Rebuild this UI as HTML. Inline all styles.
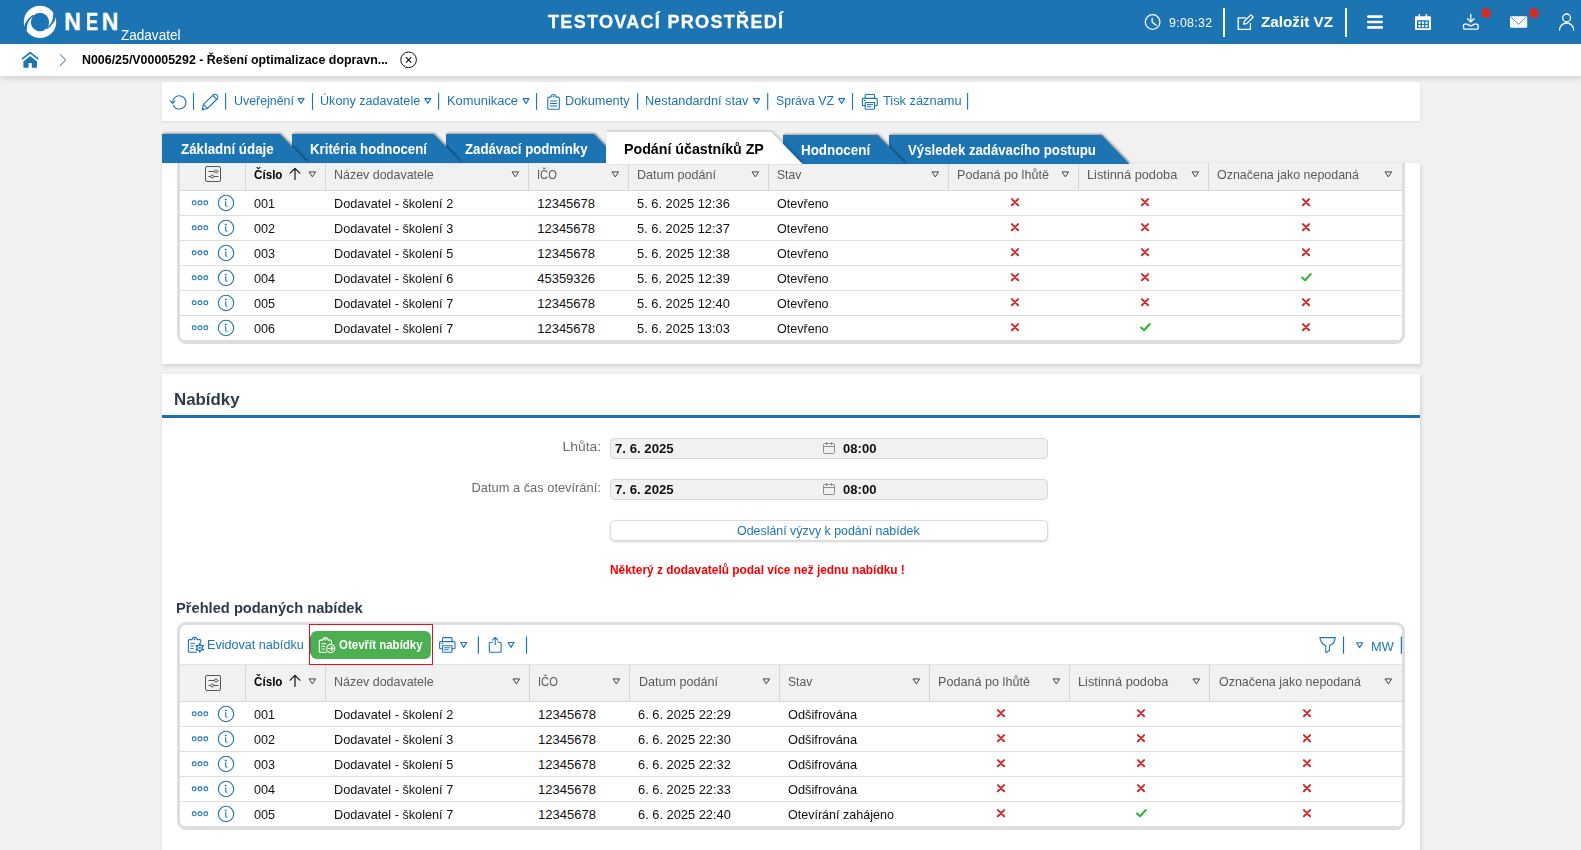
<!DOCTYPE html>
<html lang="cs">
<head>
<meta charset="utf-8">
<title>NEN - Zadavatel</title>
<style>
html,body{margin:0;padding:0;}
body{width:1581px;height:850px;overflow:hidden;background:#f1f1f1;font-family:"Liberation Sans",sans-serif;font-size:13px;color:#111;position:relative;}
*{box-sizing:border-box;}
.abs{position:absolute;}
svg{display:block;overflow:visible;}
.t{position:absolute;white-space:nowrap;line-height:1;transform-origin:0 50%;}
/* header */
#hdr{position:absolute;left:0;top:0;width:1581px;height:44px;background:#1d74b3;z-index:3;}
#crumb{position:absolute;left:0;top:44px;width:1581px;height:32px;background:#fff;box-shadow:0 2px 6px rgba(0,0,0,.15);z-index:2;}
/* cards */
.card{position:absolute;left:162px;width:1258px;background:#fff;}
#tb{top:82px;height:39px;box-shadow:0 1px 2px rgba(0,0,0,.09);}
#card1{top:163px;height:201px;box-shadow:1px 2px 4px rgba(0,0,0,.14);}
#card2{top:374px;height:480px;box-shadow:1px 2px 4px rgba(0,0,0,.14);}

/* tables */
.tw{position:absolute;left:177px;width:1228px;border:3px solid #dcdee0;border-radius:9px;background:#fff;overflow:hidden;}
.th{position:relative;height:36px;background:#f1f1f1;border-bottom:1px solid #d9d9d9;}
.tr{position:relative;height:25px;border-bottom:1px solid #dedede;}
.tr:last-child{border-bottom:1px solid #dedede;}
.th .t{color:#5a5a5a;}
.th .vs{position:absolute;top:0;width:1px;height:36px;background:#d6d6d6;}
.tr .t{top:6px;color:#111;}
#t2 .th{height:37px;}
#t2 .th .vs{height:37px;}
.ic{position:absolute;}

.fld{position:absolute;left:610px;width:438px;height:21px;background:#f1f1f1;border:1px solid #d8d8d8;border-radius:4px;}
.lbl{position:absolute;white-space:nowrap;line-height:1;color:#6a6a6a;transform-origin:100% 50%;}
.blue{color:#1d74b3;}
.sep{position:absolute;width:2px;background:#1d74b3;}
</style>
</head>
<body>
<div id="hdr">
<svg class="abs" style="left:0;top:0" width="130" height="44" viewBox="0 0 130 44">
<circle cx="40" cy="21.9" r="16.2" fill="#fff"/>
<circle cx="40" cy="22" r="9.2" fill="#1d74b3"/>
<path d="M24.06,26.9 Q25.2,20.6 32.8,14.8 L33.6,15.8 Q28.2,20.2 27.3,25.2 L26.65,31.05 L23.2,31.2 Z" fill="#1d74b3"/>
<path d="M55.94,17.1 Q54.8,23.4 47.2,29.2 L46.4,28.2 Q51.8,23.8 52.7,18.8 L53.35,12.95 L56.8,12.8 Z" fill="#1d74b3"/>
</svg>
<span class="t" id="nen1" style="left:64.2px;top:10.7px;font-size:23px;font-weight:700;color:#fff;-webkit-text-stroke:.3px #fff;transform:scaleX(1.0)">N</span><span class="t" id="nen2" style="left:86.1px;top:10.7px;font-size:23px;font-weight:700;color:#fff;-webkit-text-stroke:.3px #fff;transform:scaleX(.8)">E</span><span class="t" id="nen3" style="left:101.8px;top:10.7px;font-size:23px;font-weight:700;color:#fff;-webkit-text-stroke:.3px #fff;transform:scaleX(1.0)">N</span>
<span class="t" id="zad" style="left:120.6px;top:28px;font-size:14px;color:#fff;transform:scaleX(0.967)">Zadavatel</span>
<span class="t" id="ttl" style="left:548px;top:12.3px;font-size:19px;font-weight:700;color:#fff;letter-spacing:1.35px;-webkit-text-stroke:.3px #fff;transform:scaleX(.95)">TESTOVACÍ PROSTŘEDÍ</span>
<svg class="abs" style="left:1140px;top:8px" width="441" height="30" viewBox="1140 8 441 30" fill="none" stroke="#fff" stroke-width="1.3" stroke-linecap="round" stroke-linejoin="round">
<circle cx="1152.6" cy="22" r="7.3"/>
<path d="M1152.2,18.4 V22.2 L1156.2,25.3"/>
<path d="M1245.5,17.8 H1238.2 V29.4 H1250.4 V23.6"/>
<path d="M1243.6,24.2 L1244.3,21.3 L1250.9,14.9 L1253.2,17.2 L1246.6,23.6 Z"/>
<g stroke="none" fill="#fff">
<rect x="1223" y="8" width="2" height="29"/>
<rect x="1345" y="8" width="2" height="29"/>
<rect x="1367" y="15.3" width="16" height="2.6" rx="1.3"/>
<rect x="1367" y="20.7" width="16" height="2.6" rx="1.3"/>
<rect x="1367" y="26.1" width="16" height="2.6" rx="1.3"/>
<path d="M1416,16.2 H1430 A1,1 0 0 1 1431,17.2 V29 A1,1 0 0 1 1430,30 H1416 A1,1 0 0 1 1415,29 V17.2 A1,1 0 0 1 1416,16.2 Z M1417,20.2 V28.2 H1429 V20.2 Z"/>
<rect x="1418.6" y="14" width="1.5" height="4" rx=".7"/>
<rect x="1425.6" y="14" width="1.5" height="4" rx=".7"/>
<rect x="1418.4" y="21.6" width="2.2" height="2.2"/><rect x="1421.9" y="21.6" width="2.2" height="2.2"/><rect x="1425.4" y="21.6" width="2.2" height="2.2"/>
<rect x="1418.4" y="25" width="2.2" height="2.2"/><rect x="1421.9" y="25" width="2.2" height="2.2"/><rect x="1425.4" y="25" width="2.2" height="2.2"/>
<rect x="1510" y="16.2" width="17.2" height="11.6" rx="1.2"/>
<circle cx="1486.1" cy="13.1" r="5.1" fill="#c9302c"/>
<circle cx="1534.1" cy="13.1" r="5.1" fill="#c9302c"/>
</g>
<path d="M1511.2,17.2 L1518.6,24.4 L1526,17.2" stroke="#1d74b3" stroke-width=".8"/>
<path d="M1470.8,14.5 V21.8 M1467.6,18.8 L1470.8,22 L1474,18.8"/>
<path d="M1464.6,24.2 H1467.6 Q1470.8,27.4 1474,24.2 H1477 Q1478.1,24.2 1478.1,25.3 V28 Q1478.1,29.1 1477,29.1 H1464.6 Q1463.5,29.1 1463.5,28 V25.3 Q1463.5,24.2 1464.6,24.2 Z"/>
<circle cx="1566.6" cy="17.9" r="3.9"/>
<path d="M1559.6,30 A7,7 0 0 1 1573.6,30"/>
</svg>
<span class="t" id="clk" style="left:1168.6px;top:16.5px;font-size:12px;color:#fff;letter-spacing:.3px;transform:scaleX(1.029)">9:08:32</span>
<span class="t" id="zvz" style="left:1261.1px;top:14px;font-size:15px;font-weight:700;color:#fff;transform:scaleX(1.017)">Založit VZ</span>
</div>
<div id="crumb">
<svg class="abs" style="left:20px;top:6px" width="50" height="20" viewBox="20 50 50 20">
<path d="M22.6,58.6 L30.2,52.6 L37.8,58.6" fill="none" stroke="#1d74b3" stroke-width="1.7" stroke-linecap="round" stroke-linejoin="round"/>
<path d="M23.4,61.6 L30.2,56 L37,61.6 V67 Q37,67.8 36.2,67.8 H31.8 V63 H28.6 V67.8 H24.2 Q23.4,67.8 23.4,67 Z" fill="#1d74b3"/>
<path d="M59.8,54.3 L65.7,60.1 L59.8,65.9" fill="none" stroke="#2a5f99" stroke-width="1"/>
</svg>
<span class="t" id="bc" style="left:82.2px;top:8.7px;font-size:13px;font-weight:700;color:#000;transform:scaleX(0.954)">N006/25/V00005292 - Řešení optimalizace dopravn...</span>
<svg class="abs" style="left:398px;top:6px" width="22" height="20" viewBox="398 50 22 20" fill="none" stroke="#111" stroke-width="1">
<circle cx="408.6" cy="59.8" r="7.8"/>
<path d="M405.9,57.2 L411.3,62.6 M411.3,57.2 L405.9,62.6" stroke-width="1.2"/>
</svg>
</div>
<div id="tb" class="card"></div>
<svg class="abs" style="left:162px;top:82px" width="1258" height="39" viewBox="162 82 1258 39" fill="none" stroke="#1d74b3" stroke-width="1.1" stroke-linejoin="round" stroke-linecap="round">
<g stroke-linecap="butt"><path d="M193.5,93 V109.8"/><path d="M225.6,93 V109.8"/><path d="M312.5,93 V109.8"/><path d="M438.6,93 V109.8"/><path d="M536.5,93 V109.8"/><path d="M637.6,93 V109.8"/><path d="M767.7,93 V109.8"/><path d="M852.5,93 V109.8"/><path d="M967.6,93 V109.8"/></g>
<g stroke-width="1.1"><path d="M298.1,98.6 H304.1 L301.1,103.5 Z"/><path d="M424.8,98.6 H430.8 L427.8,103.5 Z"/><path d="M523.0,98.6 H529.0 L526.0,103.5 Z"/><path d="M753.5,98.6 H759.5 L756.5,103.5 Z"/><path d="M838.7,98.6 H844.7 L841.7,103.5 Z"/></g>
<path d="M172.7,102.6 A6.6,6.6 0 1 1 173.4,105.4"/><path d="M170.2,100.9 L172.6,103.4 L175,100.9"/>
<path d="M202.3,109.7 L203.4,104.4 L213.6,94.6 Q215.4,93.6 217,95.2 Q218.5,96.8 217.6,98.5 L207.4,108.5 Z"/><path d="M203.7,104.6 L207.2,108.2 M212.9,95.5 L216.6,99.2"/><path d="M202.3,109.7 L202.7,107.8 L204.2,109.3 Z" fill="#1d74b3" stroke-width=".4"/>
<path d="M548.8,97.1 H551 Q551.3,94.5 553.5,94.5 Q555.8,94.5 556.1,97.1 H558.3 Q559.3,97.1 559.3,98.1 V108.3 Q559.3,109.3 558.3,109.3 H548.8 Q547.8,109.3 547.8,108.3 V98.1 Q547.8,97.1 548.8,97.1 Z"/><path d="M550.3,101 H556.8 M550.3,103.5 H556.8 M550.3,106 H556.8" stroke-width="1"/><circle cx="553.5" cy="96.6" r=".5" fill="#1d74b3" stroke-width=".5"/>
<path d="M865.2,98.4 V95.2 Q865.2,94.5 865.9,94.5 H873.8 Q874.5,94.5 874.5,95.2 V98.4"/><path d="M865.2,105.6 H863.4 Q862.4,105.6 862.4,104.6 V99.4 Q862.4,98.4 863.4,98.4 H876.2 Q877.2,98.4 877.2,99.4 V104.6 Q877.2,105.6 876.2,105.6 H874.5"/><path d="M865.2,102.5 H874.5 V108.6 Q874.5,109.3 873.8,109.3 H865.9 Q865.2,109.3 865.2,108.6 Z"/><path d="M867.2,104.6 H872.6 M867.2,106.6 H870.8" stroke-width="1"/><path d="M864.2,100.5 H865.4" stroke-width="1"/>
</svg>
<span class="t blue" id="tb1" style="left:233.8px;top:94.5px;font-size:12.3px;transform:scaleX(1.007)">Uveřejnění</span>
<span class="t blue" id="tb2" style="left:320.4px;top:94.5px;font-size:12.3px;transform:scaleX(1.025)">Úkony zadavatele</span>
<span class="t blue" id="tb3" style="left:447.0px;top:94.5px;font-size:12.3px;transform:scaleX(1.050)">Komunikace</span>
<span class="t blue" id="tb4" style="left:564.8px;top:94.5px;font-size:12.3px;transform:scaleX(1.040)">Dokumenty</span>
<span class="t blue" id="tb5" style="left:645.4px;top:94.5px;font-size:12.3px;transform:scaleX(1.037)">Nestandardní stav</span>
<span class="t blue" id="tb6" style="left:775.6px;top:94.5px;font-size:12.3px;transform:scaleX(0.996)">Správa VZ</span>
<span class="t blue" id="tb7" style="left:882.5px;top:94.5px;font-size:12.3px;transform:scaleX(1.042)">Tisk záznamu</span>

<div id="card1" class="card"></div>
<svg class="abs" id="tabs" style="left:150px;top:124px;z-index:3" width="1000" height="44" viewBox="150 124 1000 44">
<g style="filter:drop-shadow(1.5px -1px 1.2px rgba(0,0,0,.38))"><path d="M889,135 H1101.5 L1129.5,164 H889 Z" fill="#1d74b3" /></g>
<g style="filter:drop-shadow(1.5px -1px 1.2px rgba(0,0,0,.38))"><path d="M783,135 H877.6 L905.6,164 H783 Z" fill="#1d74b3" /></g>
<g style="filter:drop-shadow(1.5px -1px 1.2px rgba(0,0,0,.38))"><path d="M446,134 H594 L622,163 H446 Z" fill="#1d74b3" /></g>
<g style="filter:drop-shadow(1.5px -1px 1.2px rgba(0,0,0,.38))"><path d="M292,134 H433.7 L461.7,163 H292 Z" fill="#1d74b3" /></g>
<g style="filter:drop-shadow(1.5px -1px 1.2px rgba(0,0,0,.38))"><path d="M162,134 H280 L308,163 H162 Z" fill="#1d74b3" /></g>
<g style="filter:drop-shadow(1.5px -1px 1.5px rgba(0,0,0,.22))"><path d="M606,132 H771.5 L802.5,164 H606 Z" fill="#fff" /></g>
</svg>
<span class="t" id="tab1" style="z-index:4;left:180.7px;top:142.1px;font-size:14px;font-weight:700;color:#fff;transform:scaleX(0.953)">Základní údaje</span>
<span class="t" id="tab2" style="z-index:4;left:310.2px;top:142.1px;font-size:14px;font-weight:700;color:#fff;transform:scaleX(0.946)">Kritéria hodnocení</span>
<span class="t" id="tab3" style="z-index:4;left:464.7px;top:142.1px;font-size:14px;font-weight:700;color:#fff;transform:scaleX(0.943)">Zadávací podmínky</span>
<span class="t" id="tab4" style="z-index:4;left:623.9px;top:140.8px;font-size:15px;font-weight:700;color:#000;transform:scaleX(0.948)">Podání účastníků ZP</span>
<span class="t" id="tab5" style="z-index:4;left:800.7px;top:143.1px;font-size:14px;font-weight:700;color:#fff;transform:scaleX(0.956)">Hodnocení</span>
<span class="t" id="tab6" style="z-index:4;left:907.8px;top:143.1px;font-size:14px;font-weight:700;color:#fff;transform:scaleX(0.943)">Výsledek zadávacího postupu</span>

<div id="card2" class="card"></div>
<div class="abs" style="left:162px;top:163px;width:1258px;height:201px;overflow:hidden"><div class="abs" style="left:-162px;top:-163px">
<div class="tw" id="t1" style="top:152px">
<div class="th"><i class="vs" style="left:64.9px"></i><i class="vs" style="left:144.8px"></i><i class="vs" style="left:348.1px"></i><i class="vs" style="left:447.9px"></i><i class="vs" style="left:588.1px"></i><i class="vs" style="left:768.1px"></i><i class="vs" style="left:898.1px"></i><i class="vs" style="left:1028.1px"></i><svg class="ic" style="left:25px;top:11px" width="16" height="16" viewBox="0 0 16 16" fill="none" stroke="#555" stroke-width="1"><rect x=".5" y=".5" width="15" height="15" rx="1.5"/><path d="M3.5,5.5 H9.5 M12.5,5.5 H13.5 M3.5,10.5 H5.7 M8.7,10.5 H13.5"/><circle cx="11" cy="5.5" r="1.5"/><circle cx="7.2" cy="10.5" r="1.5"/></svg><span class="t" style="left:74.2px;top:13.2px;font-weight:700;color:#000;transform:scaleX(0.896)">Číslo</span><svg class="ic" style="left:127.7px;top:15.8px" width="9" height="7" viewBox="0 0 9 7" fill="none" stroke="#444" stroke-width="1" stroke-linejoin="round"><path d="M1,.9 H7.6 L4.3,5.9 Z"/></svg><span class="t" style="left:154.1px;top:13.2px;transform:scaleX(0.958)">Název dodavatele</span><svg class="ic" style="left:331.0px;top:15.8px" width="9" height="7" viewBox="0 0 9 7" fill="none" stroke="#444" stroke-width="1" stroke-linejoin="round"><path d="M1,.9 H7.6 L4.3,5.9 Z"/></svg><span class="t" style="left:357.4px;top:13.2px;transform:scaleX(0.86)">IČO</span><svg class="ic" style="left:430.8px;top:15.8px" width="9" height="7" viewBox="0 0 9 7" fill="none" stroke="#444" stroke-width="1" stroke-linejoin="round"><path d="M1,.9 H7.6 L4.3,5.9 Z"/></svg><span class="t" style="left:457.2px;top:13.2px;transform:scaleX(0.967)">Datum podání</span><svg class="ic" style="left:571.0px;top:15.8px" width="9" height="7" viewBox="0 0 9 7" fill="none" stroke="#444" stroke-width="1" stroke-linejoin="round"><path d="M1,.9 H7.6 L4.3,5.9 Z"/></svg><span class="t" style="left:597.4px;top:13.2px;transform:scaleX(0.934)">Stav</span><svg class="ic" style="left:751.0px;top:15.8px" width="9" height="7" viewBox="0 0 9 7" fill="none" stroke="#444" stroke-width="1" stroke-linejoin="round"><path d="M1,.9 H7.6 L4.3,5.9 Z"/></svg><span class="t" style="left:777.4px;top:13.2px;transform:scaleX(0.971)">Podaná po lhůtě</span><svg class="ic" style="left:881.0px;top:15.8px" width="9" height="7" viewBox="0 0 9 7" fill="none" stroke="#444" stroke-width="1" stroke-linejoin="round"><path d="M1,.9 H7.6 L4.3,5.9 Z"/></svg><span class="t" style="left:907.4px;top:13.2px;transform:scaleX(0.984)">Listinná podoba</span><svg class="ic" style="left:1011.0px;top:15.8px" width="9" height="7" viewBox="0 0 9 7" fill="none" stroke="#444" stroke-width="1" stroke-linejoin="round"><path d="M1,.9 H7.6 L4.3,5.9 Z"/></svg><span class="t" style="left:1037.4px;top:13.2px;transform:scaleX(0.958)">Označena jako nepodaná</span><svg class="ic" style="left:1204.4px;top:15.8px" width="9" height="7" viewBox="0 0 9 7" fill="none" stroke="#444" stroke-width="1" stroke-linejoin="round"><path d="M1,.9 H7.6 L4.3,5.9 Z"/></svg><svg class="ic" style="left:107.99999999999997px;top:11.9px" width="14" height="14" viewBox="0 0 14 14" fill="none" stroke="#111" stroke-width="1.2" stroke-linecap="round" stroke-linejoin="round"><path d="M7,12.4 V1.6 M2.2,6.2 L7,1.4 L11.8,6.2"/></svg></div>
<div class="tr"><svg class="ic" style="left:11px;top:8px" width="18" height="8" viewBox="0 0 18 8" fill="none" stroke="#1d74b3" stroke-width="1.1"><rect x="1.3" y="1.9" width="3.8" height="3.8" rx="1.6"/><rect x="7.1" y="1.9" width="3.8" height="3.8" rx="1.6"/><rect x="12.9" y="1.9" width="3.8" height="3.8" rx="1.6"/></svg><svg class="ic" style="left:37px;top:3px" width="18" height="18" viewBox="0 0 18 18" fill="none" stroke="#1d74b3" stroke-width="1.1" stroke-linecap="round"><circle cx="9" cy="9" r="7.7"/><circle cx="8.7" cy="5.5" r=".6" fill="#1d74b3" stroke-width=".6"/><path d="M8.7,7.6 V11.2 Q8.8,12.2 10,12.3"/></svg><span class="t" style="left:74.2px;transform:scaleX(.97)">001</span><span class="t" style="left:153.9px;transform:scaleX(.976)">Dodavatel - školení 2</span><span class="t" style="left:357.2px">12345678</span><span class="t" style="left:456.5px;transform:scaleX(.988)">5. 6. 2025 12:36</span><span class="t" style="left:597.4px;transform:scaleX(0.965)">Otevřeno</span><svg class="ic" style="left:828.6px;top:5px" width="12" height="12" viewBox="0 0 12 12" fill="none" stroke="#cf2a2c" stroke-width="2" stroke-linecap="round"><path d="M2.9,3.1 L9.1,9.3 M9.1,3.1 L2.9,9.3"/></svg><svg class="ic" style="left:958.6px;top:5px" width="12" height="12" viewBox="0 0 12 12" fill="none" stroke="#cf2a2c" stroke-width="2" stroke-linecap="round"><path d="M2.9,3.1 L9.1,9.3 M9.1,3.1 L2.9,9.3"/></svg><svg class="ic" style="left:1120.3px;top:5px" width="12" height="12" viewBox="0 0 12 12" fill="none" stroke="#cf2a2c" stroke-width="2" stroke-linecap="round"><path d="M2.9,3.1 L9.1,9.3 M9.1,3.1 L2.9,9.3"/></svg></div>
<div class="tr"><svg class="ic" style="left:11px;top:8px" width="18" height="8" viewBox="0 0 18 8" fill="none" stroke="#1d74b3" stroke-width="1.1"><rect x="1.3" y="1.9" width="3.8" height="3.8" rx="1.6"/><rect x="7.1" y="1.9" width="3.8" height="3.8" rx="1.6"/><rect x="12.9" y="1.9" width="3.8" height="3.8" rx="1.6"/></svg><svg class="ic" style="left:37px;top:3px" width="18" height="18" viewBox="0 0 18 18" fill="none" stroke="#1d74b3" stroke-width="1.1" stroke-linecap="round"><circle cx="9" cy="9" r="7.7"/><circle cx="8.7" cy="5.5" r=".6" fill="#1d74b3" stroke-width=".6"/><path d="M8.7,7.6 V11.2 Q8.8,12.2 10,12.3"/></svg><span class="t" style="left:74.2px;transform:scaleX(.97)">002</span><span class="t" style="left:153.9px;transform:scaleX(.976)">Dodavatel - školení 3</span><span class="t" style="left:357.2px">12345678</span><span class="t" style="left:456.5px;transform:scaleX(.988)">5. 6. 2025 12:37</span><span class="t" style="left:597.4px;transform:scaleX(0.965)">Otevřeno</span><svg class="ic" style="left:828.6px;top:5px" width="12" height="12" viewBox="0 0 12 12" fill="none" stroke="#cf2a2c" stroke-width="2" stroke-linecap="round"><path d="M2.9,3.1 L9.1,9.3 M9.1,3.1 L2.9,9.3"/></svg><svg class="ic" style="left:958.6px;top:5px" width="12" height="12" viewBox="0 0 12 12" fill="none" stroke="#cf2a2c" stroke-width="2" stroke-linecap="round"><path d="M2.9,3.1 L9.1,9.3 M9.1,3.1 L2.9,9.3"/></svg><svg class="ic" style="left:1120.3px;top:5px" width="12" height="12" viewBox="0 0 12 12" fill="none" stroke="#cf2a2c" stroke-width="2" stroke-linecap="round"><path d="M2.9,3.1 L9.1,9.3 M9.1,3.1 L2.9,9.3"/></svg></div>
<div class="tr"><svg class="ic" style="left:11px;top:8px" width="18" height="8" viewBox="0 0 18 8" fill="none" stroke="#1d74b3" stroke-width="1.1"><rect x="1.3" y="1.9" width="3.8" height="3.8" rx="1.6"/><rect x="7.1" y="1.9" width="3.8" height="3.8" rx="1.6"/><rect x="12.9" y="1.9" width="3.8" height="3.8" rx="1.6"/></svg><svg class="ic" style="left:37px;top:3px" width="18" height="18" viewBox="0 0 18 18" fill="none" stroke="#1d74b3" stroke-width="1.1" stroke-linecap="round"><circle cx="9" cy="9" r="7.7"/><circle cx="8.7" cy="5.5" r=".6" fill="#1d74b3" stroke-width=".6"/><path d="M8.7,7.6 V11.2 Q8.8,12.2 10,12.3"/></svg><span class="t" style="left:74.2px;transform:scaleX(.97)">003</span><span class="t" style="left:153.9px;transform:scaleX(.976)">Dodavatel - školení 5</span><span class="t" style="left:357.2px">12345678</span><span class="t" style="left:456.5px;transform:scaleX(.988)">5. 6. 2025 12:38</span><span class="t" style="left:597.4px;transform:scaleX(0.965)">Otevřeno</span><svg class="ic" style="left:828.6px;top:5px" width="12" height="12" viewBox="0 0 12 12" fill="none" stroke="#cf2a2c" stroke-width="2" stroke-linecap="round"><path d="M2.9,3.1 L9.1,9.3 M9.1,3.1 L2.9,9.3"/></svg><svg class="ic" style="left:958.6px;top:5px" width="12" height="12" viewBox="0 0 12 12" fill="none" stroke="#cf2a2c" stroke-width="2" stroke-linecap="round"><path d="M2.9,3.1 L9.1,9.3 M9.1,3.1 L2.9,9.3"/></svg><svg class="ic" style="left:1120.3px;top:5px" width="12" height="12" viewBox="0 0 12 12" fill="none" stroke="#cf2a2c" stroke-width="2" stroke-linecap="round"><path d="M2.9,3.1 L9.1,9.3 M9.1,3.1 L2.9,9.3"/></svg></div>
<div class="tr"><svg class="ic" style="left:11px;top:8px" width="18" height="8" viewBox="0 0 18 8" fill="none" stroke="#1d74b3" stroke-width="1.1"><rect x="1.3" y="1.9" width="3.8" height="3.8" rx="1.6"/><rect x="7.1" y="1.9" width="3.8" height="3.8" rx="1.6"/><rect x="12.9" y="1.9" width="3.8" height="3.8" rx="1.6"/></svg><svg class="ic" style="left:37px;top:3px" width="18" height="18" viewBox="0 0 18 18" fill="none" stroke="#1d74b3" stroke-width="1.1" stroke-linecap="round"><circle cx="9" cy="9" r="7.7"/><circle cx="8.7" cy="5.5" r=".6" fill="#1d74b3" stroke-width=".6"/><path d="M8.7,7.6 V11.2 Q8.8,12.2 10,12.3"/></svg><span class="t" style="left:74.2px;transform:scaleX(.97)">004</span><span class="t" style="left:153.9px;transform:scaleX(.976)">Dodavatel - školení 6</span><span class="t" style="left:357.2px">45359326</span><span class="t" style="left:456.5px;transform:scaleX(.988)">5. 6. 2025 12:39</span><span class="t" style="left:597.4px;transform:scaleX(0.965)">Otevřeno</span><svg class="ic" style="left:828.6px;top:5px" width="12" height="12" viewBox="0 0 12 12" fill="none" stroke="#cf2a2c" stroke-width="2" stroke-linecap="round"><path d="M2.9,3.1 L9.1,9.3 M9.1,3.1 L2.9,9.3"/></svg><svg class="ic" style="left:958.6px;top:5px" width="12" height="12" viewBox="0 0 12 12" fill="none" stroke="#cf2a2c" stroke-width="2" stroke-linecap="round"><path d="M2.9,3.1 L9.1,9.3 M9.1,3.1 L2.9,9.3"/></svg><svg class="ic" style="left:1120.3px;top:5px" width="12" height="12" viewBox="0 0 12 12" fill="none" stroke="#2fb62f" stroke-width="2" stroke-linecap="round" stroke-linejoin="round"><path d="M2,6.5 L5.1,9.2 L10.8,3"/></svg></div>
<div class="tr"><svg class="ic" style="left:11px;top:8px" width="18" height="8" viewBox="0 0 18 8" fill="none" stroke="#1d74b3" stroke-width="1.1"><rect x="1.3" y="1.9" width="3.8" height="3.8" rx="1.6"/><rect x="7.1" y="1.9" width="3.8" height="3.8" rx="1.6"/><rect x="12.9" y="1.9" width="3.8" height="3.8" rx="1.6"/></svg><svg class="ic" style="left:37px;top:3px" width="18" height="18" viewBox="0 0 18 18" fill="none" stroke="#1d74b3" stroke-width="1.1" stroke-linecap="round"><circle cx="9" cy="9" r="7.7"/><circle cx="8.7" cy="5.5" r=".6" fill="#1d74b3" stroke-width=".6"/><path d="M8.7,7.6 V11.2 Q8.8,12.2 10,12.3"/></svg><span class="t" style="left:74.2px;transform:scaleX(.97)">005</span><span class="t" style="left:153.9px;transform:scaleX(.976)">Dodavatel - školení 7</span><span class="t" style="left:357.2px">12345678</span><span class="t" style="left:456.5px;transform:scaleX(.988)">5. 6. 2025 12:40</span><span class="t" style="left:597.4px;transform:scaleX(0.965)">Otevřeno</span><svg class="ic" style="left:828.6px;top:5px" width="12" height="12" viewBox="0 0 12 12" fill="none" stroke="#cf2a2c" stroke-width="2" stroke-linecap="round"><path d="M2.9,3.1 L9.1,9.3 M9.1,3.1 L2.9,9.3"/></svg><svg class="ic" style="left:958.6px;top:5px" width="12" height="12" viewBox="0 0 12 12" fill="none" stroke="#cf2a2c" stroke-width="2" stroke-linecap="round"><path d="M2.9,3.1 L9.1,9.3 M9.1,3.1 L2.9,9.3"/></svg><svg class="ic" style="left:1120.3px;top:5px" width="12" height="12" viewBox="0 0 12 12" fill="none" stroke="#cf2a2c" stroke-width="2" stroke-linecap="round"><path d="M2.9,3.1 L9.1,9.3 M9.1,3.1 L2.9,9.3"/></svg></div>
<div class="tr"><svg class="ic" style="left:11px;top:8px" width="18" height="8" viewBox="0 0 18 8" fill="none" stroke="#1d74b3" stroke-width="1.1"><rect x="1.3" y="1.9" width="3.8" height="3.8" rx="1.6"/><rect x="7.1" y="1.9" width="3.8" height="3.8" rx="1.6"/><rect x="12.9" y="1.9" width="3.8" height="3.8" rx="1.6"/></svg><svg class="ic" style="left:37px;top:3px" width="18" height="18" viewBox="0 0 18 18" fill="none" stroke="#1d74b3" stroke-width="1.1" stroke-linecap="round"><circle cx="9" cy="9" r="7.7"/><circle cx="8.7" cy="5.5" r=".6" fill="#1d74b3" stroke-width=".6"/><path d="M8.7,7.6 V11.2 Q8.8,12.2 10,12.3"/></svg><span class="t" style="left:74.2px;transform:scaleX(.97)">006</span><span class="t" style="left:153.9px;transform:scaleX(.976)">Dodavatel - školení 7</span><span class="t" style="left:357.2px">12345678</span><span class="t" style="left:456.5px;transform:scaleX(.988)">5. 6. 2025 13:03</span><span class="t" style="left:597.4px;transform:scaleX(0.965)">Otevřeno</span><svg class="ic" style="left:828.6px;top:5px" width="12" height="12" viewBox="0 0 12 12" fill="none" stroke="#cf2a2c" stroke-width="2" stroke-linecap="round"><path d="M2.9,3.1 L9.1,9.3 M9.1,3.1 L2.9,9.3"/></svg><svg class="ic" style="left:958.6px;top:5px" width="12" height="12" viewBox="0 0 12 12" fill="none" stroke="#2fb62f" stroke-width="2" stroke-linecap="round" stroke-linejoin="round"><path d="M2,6.5 L5.1,9.2 L10.8,3"/></svg><svg class="ic" style="left:1120.3px;top:5px" width="12" height="12" viewBox="0 0 12 12" fill="none" stroke="#cf2a2c" stroke-width="2" stroke-linecap="round"><path d="M2.9,3.1 L9.1,9.3 M9.1,3.1 L2.9,9.3"/></svg></div>
</div>
</div></div>
<div class="abs" style="left:309px;top:624px;width:124px;height:41px;border:1px solid #e8101e;z-index:5"></div>
<span class="t" id="h_nab" style="left:173.8px;top:390.9px;font-size:17px;font-weight:700;color:#2e3b49;transform:scaleX(0.991)">Nabídky</span>
<div class="abs" style="left:162px;top:415px;width:1258px;height:3px;background:#1c72b1"></div>
<span class="lbl" id="l1" style="right:979.7px;top:440px;transform:scaleX(1.067)">Lhůta:</span>
<div class="fld" style="top:438px"></div>
<span class="t" id="f1a" style="left:614.8px;top:441.6px;font-weight:700;color:#111;transform:scaleX(1.015)">7. 6. 2025</span>
<svg class="abs" style="left:822px;top:441px" width="14" height="14" viewBox="0 0 14 14" fill="none" stroke="#8e8e8e" stroke-width="1"><rect x="1.5" y="2.5" width="11" height="10" rx="1.2"/><path d="M1.5,5.5 H12.5 M4.5,1 V4 M9.5,1 V4"/></svg>
<span class="t" id="f1b" style="left:842.8px;top:441.6px;font-weight:700;color:#111;transform:scaleX(1.005)">08:00</span>
<span class="lbl" id="l2" style="right:980.0px;top:481px;transform:scaleX(0.988)">Datum a čas otevírání:</span>
<div class="fld" style="top:479px"></div>
<span class="t" id="f2a" style="left:614.8px;top:482.6px;font-weight:700;color:#111;transform:scaleX(1.015)">7. 6. 2025</span>
<svg class="abs" style="left:822px;top:482px" width="14" height="14" viewBox="0 0 14 14" fill="none" stroke="#8e8e8e" stroke-width="1"><rect x="1.5" y="2.5" width="11" height="10" rx="1.2"/><path d="M1.5,5.5 H12.5 M4.5,1 V4 M9.5,1 V4"/></svg>
<span class="t" id="f2b" style="left:842.8px;top:482.6px;font-weight:700;color:#111;transform:scaleX(1.005)">08:00</span>
<div class="abs" style="left:610px;top:520px;width:438px;height:21px;background:#fff;border:1px solid #dcdcdc;border-radius:5px;box-shadow:0 1px 2px rgba(0,0,0,.18)"></div>
<span class="t blue" id="btn1" style="left:737.0px;top:524.4px;transform:scaleX(0.954)">Odeslání výzvy k podání nabídek</span>
<span class="t" id="err" style="left:609.6px;top:562.8px;font-weight:700;color:#f00;transform:scaleX(0.915)">Některý z dodavatelů podal více než jednu nabídku !</span>
<span class="t" id="h_pre" style="left:176.3px;top:600px;font-size:15px;font-weight:700;color:#2e3b49;transform:scaleX(0.978)">Přehled podaných nabídek</span>
<div class="tw" id="t2" style="top:622px">
<div id="t2tb" style="position:relative;height:40px;border-bottom:1px solid #e2e2e2">
<svg class="abs" style="left:0;top:0" width="1222" height="39" viewBox="180 625 1222 39" fill="none" stroke="#1d74b3" stroke-width="1.1" stroke-linejoin="round" stroke-linecap="round">
<path d="M196.6,652.2 H189.4 Q188.4,652.2 188.4,651.2 V640.6 Q188.4,639.6 189.4,639.6 H192 Q192.4,637.3 194.6,637.3 Q196.9,637.3 197.3,639.6 H199.8 Q200.8,639.6 200.8,640.6 V643"/><circle cx="194.6" cy="639.3" r=".4"/><path d="M190.8,643.4 H194.4 M190.8,646 H193.4 M190.8,648.6 H193.2" stroke-width="1"/><circle cx="199.8" cy="647.8" r="2.9"/><circle cx="199.8" cy="647.8" r=".9" fill="#1d74b3" stroke-width=".6"/><path d="M199.8,643.6 V644.9 M199.8,650.7 V652 M203.4,645.7 L202.3,646.35 M197.3,649.25 L196.2,649.9 M203.4,649.9 L202.3,649.25 M197.3,646.35 L196.2,645.7" stroke-width="1.5"/>
<path d="M310.6,636.4 V653.6" stroke-linecap="butt"/>
<rect x="310.7" y="631" width="120.2" height="28" rx="6" fill="#4caf50" stroke="none"/>
<g stroke="#fff"><path d="M326.4,652.3 H320.3 Q319.3,652.3 319.3,651.3 V641.1 Q319.3,640.1 320.3,640.1 H322.8 Q323.2,637.6 325.4,637.6 Q327.7,637.6 328.1,640.1 H330.4 Q331.4,640.1 331.4,641.1 V643.4"/><circle cx="325.4" cy="639.6" r=".4"/><path d="M322,643.8 H325.8 M322,646.4 H324.6 M322,649 H324.4" stroke-width="1.1"/><circle cx="330.7" cy="648.5" r="4.1"/><path d="M328.3,648.5 H332.8 M331.2,646.6 L333.1,648.5 L331.2,650.4" stroke-width="1.2"/></g>
<path d="M442.6,641.6 V638.4 Q442.6,637.6 443.4,637.6 H451.2 Q452,637.6 452,638.4 V641.6"/><path d="M442.6,648.8 H440.6 Q439.6,648.8 439.6,647.8 V642.6 Q439.6,641.6 440.6,641.6 H454 Q455,641.6 455,642.6 V647.8 Q455,648.8 454,648.8 H452"/><path d="M442.6,645.7 H452 V651.5 Q452,652.3 451.2,652.3 H443.4 Q442.6,652.3 442.6,651.5 Z"/><path d="M444.6,647.8 H450 M444.6,649.8 H448.2 M441.6,643.7 H442.8" stroke-width="1"/>
<path d="M460.7,642.5 H466.7 L463.7,647.4 Z"/><path d="M508.1,642.5 H514.1 L511.1,647.4 Z"/><path d="M1356.6,642.7 H1362.6 L1359.6,647.6 Z"/><g stroke-width="1.2" stroke-linecap="butt"><path d="M478.4,636.4 V653.8"/><path d="M526.5,636.4 V653.8"/><path d="M1343.5,636.4 V653.8"/><path d="M1401.4,636.4 V653.8"/></g>
<path d="M492.4,642.2 H490.3 Q489.3,642.2 489.3,643.2 V651.3 Q489.3,652.3 490.3,652.3 H500.1 Q501.1,652.3 501.1,651.3 V643.2 Q501.1,642.2 500.1,642.2 H498"/><path d="M495.2,644.8 V637.6 M492.6,640.2 L495.2,637.5 L497.8,640.2"/>
<path d="M1319.9,637.6 H1335.2 Q1334.8,643.2 1329.5,645.6 V650.6 L1326.3,652.4 L1325.8,652 V645.6 Q1320.4,643.2 1319.9,637.6 Z"/>
</svg>
<span class="t blue" id="tb2a" style="left:27.1px;top:14.2px;font-size:12.3px;transform:scaleX(1.025)">Evidovat nabídku</span>
<span class="t" id="tb2b" style="left:158.8px;top:14.2px;font-size:12.3px;font-weight:700;color:#fff;transform:scaleX(.934)">Otevřít nabídky</span>
<span class="t blue" id="tb2c" style="left:1190.6px;top:16.0px;font-size:12.3px;transform:scaleX(1.039)">MW</span>
</div>
<div class="th"><i class="vs" style="left:64.9px"></i><i class="vs" style="left:145.0px"></i><i class="vs" style="left:349.0px"></i><i class="vs" style="left:449.2px"></i><i class="vs" style="left:598.8px"></i><i class="vs" style="left:749.0px"></i><i class="vs" style="left:889.1px"></i><i class="vs" style="left:1029.2px"></i><svg class="ic" style="left:25px;top:10px" width="16" height="16" viewBox="0 0 16 16" fill="none" stroke="#555" stroke-width="1"><rect x=".5" y=".5" width="15" height="15" rx="1.5"/><path d="M3.5,5.5 H9.5 M12.5,5.5 H13.5 M3.5,10.5 H5.7 M8.7,10.5 H13.5"/><circle cx="11" cy="5.5" r="1.5"/><circle cx="7.2" cy="10.5" r="1.5"/></svg><span class="t" style="left:74.2px;top:10.2px;font-weight:700;color:#000;transform:scaleX(0.896)">Číslo</span><svg class="ic" style="left:127.9px;top:12.9px" width="9" height="7" viewBox="0 0 9 7" fill="none" stroke="#444" stroke-width="1" stroke-linejoin="round"><path d="M1,.9 H7.6 L4.3,5.9 Z"/></svg><span class="t" style="left:154.3px;top:10.2px;transform:scaleX(0.958)">Název dodavatele</span><svg class="ic" style="left:331.9px;top:12.9px" width="9" height="7" viewBox="0 0 9 7" fill="none" stroke="#444" stroke-width="1" stroke-linejoin="round"><path d="M1,.9 H7.6 L4.3,5.9 Z"/></svg><span class="t" style="left:358.3px;top:10.2px;transform:scaleX(0.86)">IČO</span><svg class="ic" style="left:432.1px;top:12.9px" width="9" height="7" viewBox="0 0 9 7" fill="none" stroke="#444" stroke-width="1" stroke-linejoin="round"><path d="M1,.9 H7.6 L4.3,5.9 Z"/></svg><span class="t" style="left:458.5px;top:10.2px;transform:scaleX(0.967)">Datum podání</span><svg class="ic" style="left:581.7px;top:12.9px" width="9" height="7" viewBox="0 0 9 7" fill="none" stroke="#444" stroke-width="1" stroke-linejoin="round"><path d="M1,.9 H7.6 L4.3,5.9 Z"/></svg><span class="t" style="left:608.1px;top:10.2px;transform:scaleX(0.934)">Stav</span><svg class="ic" style="left:731.9px;top:12.9px" width="9" height="7" viewBox="0 0 9 7" fill="none" stroke="#444" stroke-width="1" stroke-linejoin="round"><path d="M1,.9 H7.6 L4.3,5.9 Z"/></svg><span class="t" style="left:758.3px;top:10.2px;transform:scaleX(0.971)">Podaná po lhůtě</span><svg class="ic" style="left:872.0px;top:12.9px" width="9" height="7" viewBox="0 0 9 7" fill="none" stroke="#444" stroke-width="1" stroke-linejoin="round"><path d="M1,.9 H7.6 L4.3,5.9 Z"/></svg><span class="t" style="left:898.4px;top:10.2px;transform:scaleX(0.984)">Listinná podoba</span><svg class="ic" style="left:1012.1px;top:12.9px" width="9" height="7" viewBox="0 0 9 7" fill="none" stroke="#444" stroke-width="1" stroke-linejoin="round"><path d="M1,.9 H7.6 L4.3,5.9 Z"/></svg><span class="t" style="left:1038.5px;top:10.2px;transform:scaleX(0.958)">Označena jako nepodaná</span><svg class="ic" style="left:1204.4px;top:12.9px" width="9" height="7" viewBox="0 0 9 7" fill="none" stroke="#444" stroke-width="1" stroke-linejoin="round"><path d="M1,.9 H7.6 L4.3,5.9 Z"/></svg><svg class="ic" style="left:107.99999999999997px;top:8.9px" width="14" height="14" viewBox="0 0 14 14" fill="none" stroke="#111" stroke-width="1.2" stroke-linecap="round" stroke-linejoin="round"><path d="M7,12.4 V1.6 M2.2,6.2 L7,1.4 L11.8,6.2"/></svg></div>
<div class="tr"><svg class="ic" style="left:11px;top:8px" width="18" height="8" viewBox="0 0 18 8" fill="none" stroke="#1d74b3" stroke-width="1.1"><rect x="1.3" y="1.9" width="3.8" height="3.8" rx="1.6"/><rect x="7.1" y="1.9" width="3.8" height="3.8" rx="1.6"/><rect x="12.9" y="1.9" width="3.8" height="3.8" rx="1.6"/></svg><svg class="ic" style="left:37px;top:3px" width="18" height="18" viewBox="0 0 18 18" fill="none" stroke="#1d74b3" stroke-width="1.1" stroke-linecap="round"><circle cx="9" cy="9" r="7.7"/><circle cx="8.7" cy="5.5" r=".6" fill="#1d74b3" stroke-width=".6"/><path d="M8.7,7.6 V11.2 Q8.8,12.2 10,12.3"/></svg><span class="t" style="left:74.2px;transform:scaleX(.97)">001</span><span class="t" style="left:154.1px;transform:scaleX(.976)">Dodavatel - školení 2</span><span class="t" style="left:358.1px">12345678</span><span class="t" style="left:457.8px;transform:scaleX(.988)">6. 6. 2025 22:29</span><span class="t" style="left:608.1px;transform:scaleX(0.985)">Odšifrována</span><svg class="ic" style="left:814.5px;top:5px" width="12" height="12" viewBox="0 0 12 12" fill="none" stroke="#cf2a2c" stroke-width="2" stroke-linecap="round"><path d="M2.9,3.1 L9.1,9.3 M9.1,3.1 L2.9,9.3"/></svg><svg class="ic" style="left:954.7px;top:5px" width="12" height="12" viewBox="0 0 12 12" fill="none" stroke="#cf2a2c" stroke-width="2" stroke-linecap="round"><path d="M2.9,3.1 L9.1,9.3 M9.1,3.1 L2.9,9.3"/></svg><svg class="ic" style="left:1120.8px;top:5px" width="12" height="12" viewBox="0 0 12 12" fill="none" stroke="#cf2a2c" stroke-width="2" stroke-linecap="round"><path d="M2.9,3.1 L9.1,9.3 M9.1,3.1 L2.9,9.3"/></svg></div>
<div class="tr"><svg class="ic" style="left:11px;top:8px" width="18" height="8" viewBox="0 0 18 8" fill="none" stroke="#1d74b3" stroke-width="1.1"><rect x="1.3" y="1.9" width="3.8" height="3.8" rx="1.6"/><rect x="7.1" y="1.9" width="3.8" height="3.8" rx="1.6"/><rect x="12.9" y="1.9" width="3.8" height="3.8" rx="1.6"/></svg><svg class="ic" style="left:37px;top:3px" width="18" height="18" viewBox="0 0 18 18" fill="none" stroke="#1d74b3" stroke-width="1.1" stroke-linecap="round"><circle cx="9" cy="9" r="7.7"/><circle cx="8.7" cy="5.5" r=".6" fill="#1d74b3" stroke-width=".6"/><path d="M8.7,7.6 V11.2 Q8.8,12.2 10,12.3"/></svg><span class="t" style="left:74.2px;transform:scaleX(.97)">002</span><span class="t" style="left:154.1px;transform:scaleX(.976)">Dodavatel - školení 3</span><span class="t" style="left:358.1px">12345678</span><span class="t" style="left:457.8px;transform:scaleX(.988)">6. 6. 2025 22:30</span><span class="t" style="left:608.1px;transform:scaleX(0.985)">Odšifrována</span><svg class="ic" style="left:814.5px;top:5px" width="12" height="12" viewBox="0 0 12 12" fill="none" stroke="#cf2a2c" stroke-width="2" stroke-linecap="round"><path d="M2.9,3.1 L9.1,9.3 M9.1,3.1 L2.9,9.3"/></svg><svg class="ic" style="left:954.7px;top:5px" width="12" height="12" viewBox="0 0 12 12" fill="none" stroke="#cf2a2c" stroke-width="2" stroke-linecap="round"><path d="M2.9,3.1 L9.1,9.3 M9.1,3.1 L2.9,9.3"/></svg><svg class="ic" style="left:1120.8px;top:5px" width="12" height="12" viewBox="0 0 12 12" fill="none" stroke="#cf2a2c" stroke-width="2" stroke-linecap="round"><path d="M2.9,3.1 L9.1,9.3 M9.1,3.1 L2.9,9.3"/></svg></div>
<div class="tr"><svg class="ic" style="left:11px;top:8px" width="18" height="8" viewBox="0 0 18 8" fill="none" stroke="#1d74b3" stroke-width="1.1"><rect x="1.3" y="1.9" width="3.8" height="3.8" rx="1.6"/><rect x="7.1" y="1.9" width="3.8" height="3.8" rx="1.6"/><rect x="12.9" y="1.9" width="3.8" height="3.8" rx="1.6"/></svg><svg class="ic" style="left:37px;top:3px" width="18" height="18" viewBox="0 0 18 18" fill="none" stroke="#1d74b3" stroke-width="1.1" stroke-linecap="round"><circle cx="9" cy="9" r="7.7"/><circle cx="8.7" cy="5.5" r=".6" fill="#1d74b3" stroke-width=".6"/><path d="M8.7,7.6 V11.2 Q8.8,12.2 10,12.3"/></svg><span class="t" style="left:74.2px;transform:scaleX(.97)">003</span><span class="t" style="left:154.1px;transform:scaleX(.976)">Dodavatel - školení 5</span><span class="t" style="left:358.1px">12345678</span><span class="t" style="left:457.8px;transform:scaleX(.988)">6. 6. 2025 22:32</span><span class="t" style="left:608.1px;transform:scaleX(0.985)">Odšifrována</span><svg class="ic" style="left:814.5px;top:5px" width="12" height="12" viewBox="0 0 12 12" fill="none" stroke="#cf2a2c" stroke-width="2" stroke-linecap="round"><path d="M2.9,3.1 L9.1,9.3 M9.1,3.1 L2.9,9.3"/></svg><svg class="ic" style="left:954.7px;top:5px" width="12" height="12" viewBox="0 0 12 12" fill="none" stroke="#cf2a2c" stroke-width="2" stroke-linecap="round"><path d="M2.9,3.1 L9.1,9.3 M9.1,3.1 L2.9,9.3"/></svg><svg class="ic" style="left:1120.8px;top:5px" width="12" height="12" viewBox="0 0 12 12" fill="none" stroke="#cf2a2c" stroke-width="2" stroke-linecap="round"><path d="M2.9,3.1 L9.1,9.3 M9.1,3.1 L2.9,9.3"/></svg></div>
<div class="tr"><svg class="ic" style="left:11px;top:8px" width="18" height="8" viewBox="0 0 18 8" fill="none" stroke="#1d74b3" stroke-width="1.1"><rect x="1.3" y="1.9" width="3.8" height="3.8" rx="1.6"/><rect x="7.1" y="1.9" width="3.8" height="3.8" rx="1.6"/><rect x="12.9" y="1.9" width="3.8" height="3.8" rx="1.6"/></svg><svg class="ic" style="left:37px;top:3px" width="18" height="18" viewBox="0 0 18 18" fill="none" stroke="#1d74b3" stroke-width="1.1" stroke-linecap="round"><circle cx="9" cy="9" r="7.7"/><circle cx="8.7" cy="5.5" r=".6" fill="#1d74b3" stroke-width=".6"/><path d="M8.7,7.6 V11.2 Q8.8,12.2 10,12.3"/></svg><span class="t" style="left:74.2px;transform:scaleX(.97)">004</span><span class="t" style="left:154.1px;transform:scaleX(.976)">Dodavatel - školení 7</span><span class="t" style="left:358.1px">12345678</span><span class="t" style="left:457.8px;transform:scaleX(.988)">6. 6. 2025 22:33</span><span class="t" style="left:608.1px;transform:scaleX(0.985)">Odšifrována</span><svg class="ic" style="left:814.5px;top:5px" width="12" height="12" viewBox="0 0 12 12" fill="none" stroke="#cf2a2c" stroke-width="2" stroke-linecap="round"><path d="M2.9,3.1 L9.1,9.3 M9.1,3.1 L2.9,9.3"/></svg><svg class="ic" style="left:954.7px;top:5px" width="12" height="12" viewBox="0 0 12 12" fill="none" stroke="#cf2a2c" stroke-width="2" stroke-linecap="round"><path d="M2.9,3.1 L9.1,9.3 M9.1,3.1 L2.9,9.3"/></svg><svg class="ic" style="left:1120.8px;top:5px" width="12" height="12" viewBox="0 0 12 12" fill="none" stroke="#cf2a2c" stroke-width="2" stroke-linecap="round"><path d="M2.9,3.1 L9.1,9.3 M9.1,3.1 L2.9,9.3"/></svg></div>
<div class="tr"><svg class="ic" style="left:11px;top:8px" width="18" height="8" viewBox="0 0 18 8" fill="none" stroke="#1d74b3" stroke-width="1.1"><rect x="1.3" y="1.9" width="3.8" height="3.8" rx="1.6"/><rect x="7.1" y="1.9" width="3.8" height="3.8" rx="1.6"/><rect x="12.9" y="1.9" width="3.8" height="3.8" rx="1.6"/></svg><svg class="ic" style="left:37px;top:3px" width="18" height="18" viewBox="0 0 18 18" fill="none" stroke="#1d74b3" stroke-width="1.1" stroke-linecap="round"><circle cx="9" cy="9" r="7.7"/><circle cx="8.7" cy="5.5" r=".6" fill="#1d74b3" stroke-width=".6"/><path d="M8.7,7.6 V11.2 Q8.8,12.2 10,12.3"/></svg><span class="t" style="left:74.2px;transform:scaleX(.97)">005</span><span class="t" style="left:154.1px;transform:scaleX(.976)">Dodavatel - školení 7</span><span class="t" style="left:358.1px">12345678</span><span class="t" style="left:457.8px;transform:scaleX(.988)">6. 6. 2025 22:40</span><span class="t" style="left:608.1px;transform:scaleX(0.964)">Otevírání zahájeno</span><svg class="ic" style="left:814.5px;top:5px" width="12" height="12" viewBox="0 0 12 12" fill="none" stroke="#cf2a2c" stroke-width="2" stroke-linecap="round"><path d="M2.9,3.1 L9.1,9.3 M9.1,3.1 L2.9,9.3"/></svg><svg class="ic" style="left:954.7px;top:5px" width="12" height="12" viewBox="0 0 12 12" fill="none" stroke="#2fb62f" stroke-width="2" stroke-linecap="round" stroke-linejoin="round"><path d="M2,6.5 L5.1,9.2 L10.8,3"/></svg><svg class="ic" style="left:1120.8px;top:5px" width="12" height="12" viewBox="0 0 12 12" fill="none" stroke="#cf2a2c" stroke-width="2" stroke-linecap="round"><path d="M2.9,3.1 L9.1,9.3 M9.1,3.1 L2.9,9.3"/></svg></div>
</div>

</body>
</html>
